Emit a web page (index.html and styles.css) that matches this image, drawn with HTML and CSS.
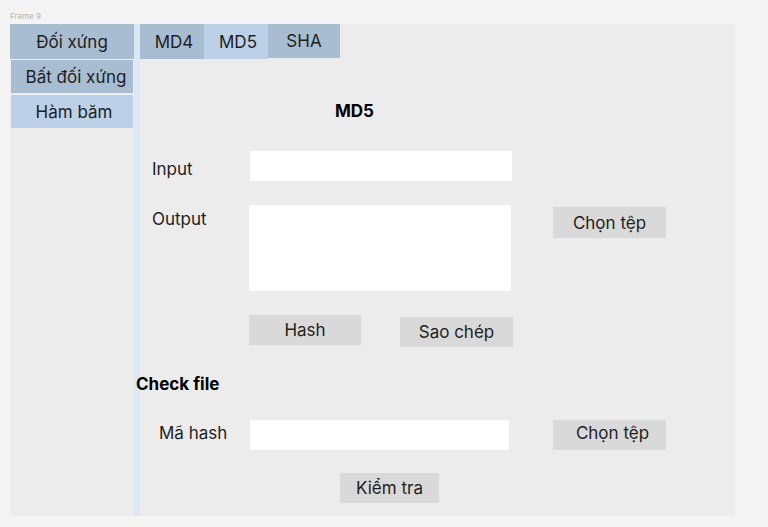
FILE: index.html
```html
<!DOCTYPE html>
<html lang="vi">
<head>
<meta charset="utf-8">
<title>Frame 9</title>
<link rel="stylesheet" href="styles.css">
</head>
<body>
<div class="page">
  <div class="frame-label">Frame 9</div>
  <div class="frame">
    <nav class="sidebar">
      <div class="side-item side-dark side-first">Đối xứng</div>
      <div class="side-item side-dark side-second">Bất đối xứng</div>
      <div class="side-item side-light side-third">Hàm băm</div>
    </nav>
    <div class="strip"></div>
    <main class="main">
      <div class="tabs">
        <div class="tab tab-dark tab-md4">MD4</div>
        <div class="tab tab-light tab-md5">MD5</div>
        <div class="tab tab-dark tab-sha">SHA</div>
      </div>
      <h1 class="heading">MD5</h1>
      <div class="row row-input">
        <label class="label label-input">Input</label>
        <div class="field field-input"></div>
      </div>
      <div class="row row-output">
        <label class="label label-output">Output</label>
        <div class="field field-output"></div>
        <div class="btn btn-choose1">Chọn tệp</div>
      </div>
      <div class="row row-actions">
        <div class="btn btn-hash">Hash</div>
        <div class="btn btn-copy">Sao chép</div>
      </div>
      <h2 class="subheading">Check file</h2>
      <div class="row row-check">
        <label class="label label-hash">Mã hash</label>
        <div class="field field-hash"></div>
        <div class="btn btn-choose2">Chọn tệp</div>
      </div>
      <div class="row row-verify">
        <div class="btn btn-verify">Kiểm tra</div>
      </div>
    </main>
  </div>
</div>
</body>
</html>
```

FILE: styles.css
```css
* { box-sizing: border-box; }
html, body {
  margin: 0;
  padding: 0;
  background: #f4f4f4;
}
body {
  font-family: Inter, "Noto Sans", "Liberation Sans", sans-serif;
  color: #1e1e1e;
  font-size: 17px;
}
.page {
  padding: 10px 0 0 10px;
}
.frame-label {
  height: 14px;
  font-size: 8px;
  line-height: 12px;
  color: #b3b3b3;
}
.frame {
  width: 725px;
  height: 492px;
  background: #ececec;
  display: flex;
}
.sidebar {
  width: 124px;
  display: flex;
  flex-direction: column;
}
.side-item {
  display: flex;
  align-items: center;
  justify-content: center;
  line-height: 20px;
}
.side-dark { background: #a9bdd2; }
.side-light { background: #bcd1e8; }
.side-first { height: 35px; }
.side-second { height: 33px; margin: 1px 1px 0 1px; padding-left: 8px; }
.side-third { height: 33px; margin: 2px 1px 0 1px; padding-left: 4px; }
.strip {
  width: 6px;
  background: #dce8f4;
}
.main {
  flex: 1;
  display: flex;
  flex-direction: column;
  align-items: flex-start;
}
.tabs {
  display: flex;
  height: 35px;
}
.tab {
  display: flex;
  align-items: center;
  justify-content: center;
}
.tab-dark { background: #a9bdd2; }
.tab-light { background: #bcd1e8; }
.tab-md4 { width: 64px; padding-left: 4px; }
.tab-md5 { width: 64px; padding-left: 4px; }
.tab-sha { width: 72px; height: 34px; }
.heading {
  margin: 42px 0 0 195px;
  font-size: 17px;
  font-weight: 700;
  line-height: 20px;
  color: #000;
}
.subheading {
  margin: 27px 0 0 -4px;
  font-size: 17px;
  font-weight: 700;
  line-height: 20px;
  color: #000;
}
.row {
  display: flex;
}
.label {
  line-height: 20px;
}
.field { background: #ffffff; }
.btn {
  background: #d9d9d9;
  display: flex;
  align-items: center;
  justify-content: center;
  height: 30px;
}
.row-input {
  margin-top: 30px;
  align-items: center;
}
.label-input { width: 98px; margin-left: 12px; padding-top: 5px; }
.field-input { width: 262px; height: 30px; }
.row-output { margin-top: 24px; }
.label-output { width: 97px; margin-left: 12px; margin-top: 4px; }
.field-output { width: 262px; height: 86px; }
.btn-choose1 { width: 113px; height: 31px; margin: 2px 0 0 42px; }
.row-actions { margin-top: 24px; }
.btn-hash { width: 112px; margin-left: 109px; }
.btn-copy { width: 113px; margin: 2px 0 0 39px; }
.row-check {
  margin-top: 26px;
  align-items: center;
}
.label-hash { width: 91px; margin-left: 19px; padding-bottom: 4px; }
.field-hash { width: 259px; height: 30px; }
.btn-choose2 { width: 113px; margin-left: 44px; padding: 0 0 4px 6px; }
.row-verify { margin-top: 23px; }
.btn-verify { width: 99px; margin-left: 200px; }
```
